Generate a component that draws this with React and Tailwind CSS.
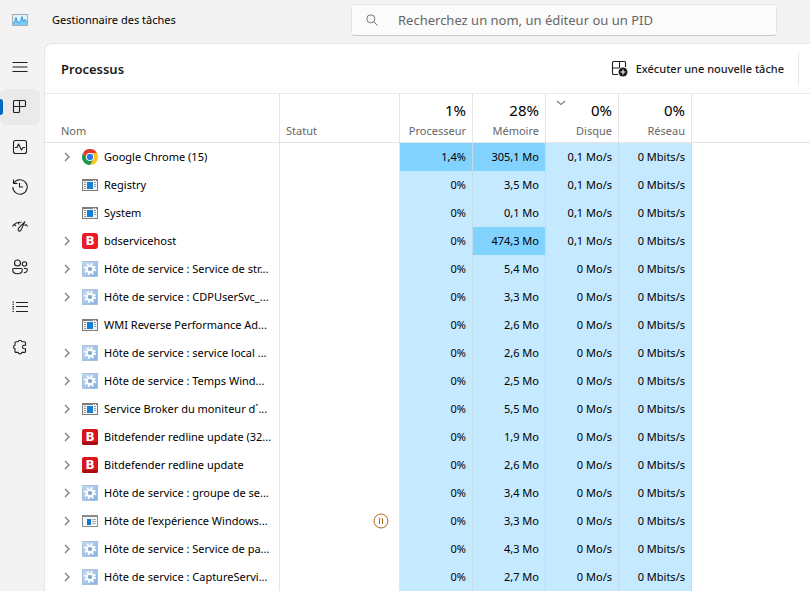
import { useState } from "react";

const PROCESSES = [
    { name: "Google Chrome (15)", icon: "chrome", expandable: true, cpu: "1,4%", mem: "305,1 Mo", disk: "0,1 Mo/s", net: "0 Mbits/s", hotCpu: true, hotMem: true },
    { name: "Registry", icon: "window", cpu: "0%", mem: "3,5 Mo", disk: "0,1 Mo/s", net: "0 Mbits/s" },
    { name: "System", icon: "window", cpu: "0%", mem: "0,1 Mo", disk: "0,1 Mo/s", net: "0 Mbits/s" },
    { name: "bdservicehost", icon: "bitFlat", expandable: true, cpu: "0%", mem: "474,3 Mo", disk: "0,1 Mo/s", net: "0 Mbits/s", hotMem: true },
    { name: "Hôte de service : Service de str...", icon: "gear", expandable: true, cpu: "0%", mem: "5,4 Mo", disk: "0 Mo/s", net: "0 Mbits/s" },
    { name: "Hôte de service : CDPUserSvc_...", icon: "gear", expandable: true, cpu: "0%", mem: "3,3 Mo", disk: "0 Mo/s", net: "0 Mbits/s" },
    { name: "WMI Reverse Performance Ad...", icon: "window", cpu: "0%", mem: "2,6 Mo", disk: "0 Mo/s", net: "0 Mbits/s" },
    { name: "Hôte de service : service local ...", icon: "gear", expandable: true, cpu: "0%", mem: "2,6 Mo", disk: "0 Mo/s", net: "0 Mbits/s" },
    { name: "Hôte de service : Temps Wind...", icon: "gear", expandable: true, cpu: "0%", mem: "2,5 Mo", disk: "0 Mo/s", net: "0 Mbits/s" },
    { name: "Service Broker du moniteur d´...", icon: "window", expandable: true, cpu: "0%", mem: "5,5 Mo", disk: "0 Mo/s", net: "0 Mbits/s" },
    { name: "Bitdefender redline update (32...", icon: "bit", expandable: true, cpu: "0%", mem: "1,9 Mo", disk: "0 Mo/s", net: "0 Mbits/s" },
    { name: "Bitdefender redline update", icon: "bit", expandable: true, cpu: "0%", mem: "2,6 Mo", disk: "0 Mo/s", net: "0 Mbits/s" },
    { name: "Hôte de service : groupe de se...", icon: "gear", expandable: true, cpu: "0%", mem: "3,4 Mo", disk: "0 Mo/s", net: "0 Mbits/s" },
    { name: "Hôte de l'expérience Windows...", icon: "app", expandable: true, suspended: true, cpu: "0%", mem: "3,3 Mo", disk: "0 Mo/s", net: "0 Mbits/s" },
    { name: "Hôte de service : Service de pa...", icon: "gear", expandable: true, cpu: "0%", mem: "4,3 Mo", disk: "0 Mo/s", net: "0 Mbits/s" },
    { name: "Hôte de service : CaptureServi...", icon: "gear", expandable: true, cpu: "0%", mem: "2,7 Mo", disk: "0 Mo/s", net: "0 Mbits/s" },
];

const USAGE_COLUMNS = [
    { key: "cpu", total: "1%", label: "Processeur" },
    { key: "mem", total: "28%", label: "Mémoire" },
    { key: "disk", total: "0%", label: "Disque", sorted: true },
    { key: "net", total: "0%", label: "Réseau" },
];

// 16px outline icons for the navigation rail
const NAV_ITEMS = [
    {
        label: "Processus",
        drawing: (
            <path d="M2.500 1.500h10a1 1 0 0 1 1 1v4a1 1 0 0 1-1 1h-5v5a1 1 0 0 1-1 1h-4a1 1 0 0 1-1-1v-10a1 1 0 0 1 1-1zM7.500 1.500v6M1.500 7.500h6" />
        ),
    },
    {
        label: "Performance",
        drawing: (
            <>
                <rect x="1.500" y="1.500" width="13" height="13" rx="2" />
                <path d="M3 8.500h2L6.500 5l3 6L11 8.500h2" />
            </>
        ),
    },
    {
        label: "Historique des applications",
        drawing: <path d="M1.500.5v4h4M1.800 4.300A7.200 7.200 0 1 1 .8 8M7.500 4v4H11" />,
    },
    {
        label: "Applications de démarrage",
        drawing: (
            <path d="M.5 7.500C2 4.500 5 3 9.500 3.200M2.500 5.500 4 7M14 5.200l1.500 2.300M12.500 6.500l1.200-.9M12.800 2.800 7.500 8.200c-1.400 1.500-1.700 3-.9 3.700.8.6 2 .1 2.700-1.500zM6.200 3.800l.8 1.600" />
        ),
    },
    {
        label: "Utilisateurs",
        drawing: (
            <>
                <circle cx="5.500" cy="4" r="3" />
                <circle cx="12.500" cy="5" r="2.200" />
                <path d="M1.700 9.500h7.600a1 1 0 0 1 1 1c0 2.700-1.800 4.300-4.800 4.300S.7 13.200.7 10.500a1 1 0 0 1 1-1zM12 9.500h2.300a1 1 0 0 1 1 1c0 2-1.200 3.200-3.500 3.300" />
            </>
        ),
    },
    {
        label: "Détails",
        drawing: <path d="M4 3.500h12M4 7.500h12M4 12.500h12M.5 3h1.500M.5 5.300h1.500M.5 7.600h1.500M.5 9.900h1.500M.5 12.500h1.500" />,
    },
    {
        label: "Services",
        drawing: (
            <path d="M4 2.700h2.200a1.900 1.900 0 0 1 3.700 0h2.600a1 1 0 0 1 1 1v2.500h-1.200a1.800 1.800 0 0 0 0 3.600h1.200v2.600a1 1 0 0 1-1 1H9.900a1.900 1.900 0 0 1-3.700 0H4a1 1 0 0 1-1-1V9.900a1.900 1.900 0 0 1 0-3.700V3.700a1 1 0 0 1 1-1z" />
        ),
    },
];

function LineIcon({ children }) {
    return (
        <svg viewBox="0 0 16 16" className="size-4 overflow-visible" fill="none" stroke="#1f1f1f" strokeWidth="1.1" strokeLinejoin="round" aria-hidden="true">
            {children}
        </svg>
    );
}

function AppLogo() {
    return (
        <svg viewBox="0 0 16 12" className="h-3 w-4" aria-hidden="true">
            <rect x=".5" y=".5" width="15" height="11" fill="#e3f3fc" stroke="#a3adb5" />
            <path d="M1 11V9l1.500-1L4 3.500 5.500 8 7 8.500l1.500-1L10 2.500l1.500 5L13 5.500 15 8.500V11z" fill="#7cc9f6" />
            <path d="M1 9l1.500-1L4 3.500 5.500 8 7 8.500l1.500-1L10 2.500l1.500 5L13 5.500 15 8.500" fill="none" stroke="#2a93e0" strokeWidth=".9" />
        </svg>
    );
}

function ChromeIcon() {
    return (
        <svg viewBox="0 0 48 48" className="size-4 shrink-0" aria-hidden="true">
            <path d="M24 12h20.800A24 24 0 0 1 24 48l10.400-18z" fill="#fcc31e" />
            <path d="M3.200 12 13.600 30 24 36l10.400-6L24 48A24 24 0 0 1 3.200 12z" fill="#1e9648" />
            <path d="M3.200 12A24 24 0 0 1 44.800 12H24a12 12 0 0 0-10.400 18z" fill="#e33b2e" />
            <circle cx="24" cy="24" r="12" fill="#fff" />
            <circle cx="24" cy="24" r="9.500" fill="#2f7bea" />
        </svg>
    );
}

function WindowIcon() {
    return (
        <svg viewBox="0 0 16 16" className="size-4 shrink-0" shapeRendering="crispEdges" aria-hidden="true">
            <rect x="0" y="2" width="16" height="12" fill="#7c7c7c" />
            <rect x="1" y="4" width="14" height="9" fill="#f4f4f4" />
            <path d="M11 3h1v1h-1zM13 3h1v1h-1z" fill="#fff" />
            <rect x="5" y="5" width="6" height="7" fill="#1180d8" />
            <path d="M2 5h2v1H2zM2 7h2v1H2zM2 9h2v1H2zM2 11h2v1H2zM12 5h2v1h-2zM12 7h2v1h-2zM12 9h2v1h-2z" fill="#9a9a9a" />
        </svg>
    );
}

function HostAppIcon() {
    return (
        <svg viewBox="0 0 16 16" className="size-4 shrink-0" shapeRendering="crispEdges" aria-hidden="true">
            <rect x="0" y="2" width="16" height="12" fill="#8c8c8c" />
            <rect x="1" y="4" width="14" height="9" fill="#f7f7f7" />
            <rect x="5" y="6" width="4" height="6" fill="#0b78d0" />
            <path d="M10 6h4v1h-4zM10 8h4v1h-4zM10 10h4v1h-4z" fill="#a6a6a6" />
        </svg>
    );
}

function GearIcon() {
    return (
        <svg viewBox="0 0 16 16" className="size-4 shrink-0" aria-hidden="true">
            <defs>
                <linearGradient id="gearTile" x1="0" y1="0" x2="1" y2="1">
                    <stop offset="0" stopColor="#c4dbf2" />
                    <stop offset="1" stopColor="#86b0e0" />
                </linearGradient>
            </defs>
            <rect x=".5" y=".5" width="15" height="15" fill="url(#gearTile)" stroke="#a9c3de" />
            <circle cx="8" cy="8" r="5" fill="none" stroke="#fff" strokeWidth="2" strokeDasharray="2 1.930" />
            <circle cx="8" cy="8" r="3.200" fill="none" stroke="#fff" strokeWidth="2.200" />
            <circle cx="8" cy="8" r="2" fill="#7ea9d8" />
        </svg>
    );
}

function BitdefenderIcon({ flat }) {
    return (
        <svg viewBox="0 0 16 16" className="size-4 shrink-0" aria-hidden="true">
            <rect width="16" height="16" rx={flat ? 3 : 2} fill={flat ? "#ed1c24" : "#d9151a"} />
            {!flat && <path d="M0 13h16v1a2 2 0 0 1-2 2H2a2 2 0 0 1-2-2z" fill="#a80c10" />}
            <text x="8" y="12" textAnchor="middle" fontFamily="DejaVu Sans, sans-serif" fontWeight="bold" fontSize="12" fill="#fff">B</text>
        </svg>
    );
}

function ProcessIcon({ type }) {
    if (type === "chrome") return <ChromeIcon />;
    if (type === "window") return <WindowIcon />;
    if (type === "app") return <HostAppIcon />;
    if (type === "gear") return <GearIcon />;
    return <BitdefenderIcon flat={type === "bitFlat"} />;
}

function TitleBar() {
    return (
        <header className="flex h-[43px] items-center pb-[3px]">
            <div className="flex w-[351px] shrink-0 items-center gap-6 pl-3">
                <AppLogo />
                <h1 className="text-[11px] leading-4">Gestionnaire des tâches</h1>
            </div>
            <label className="flex h-8 w-full max-w-[426px] items-center gap-5 rounded border border-[#e5e5e5] border-b-[#c9c9c9] bg-[#fbfbfb] pl-[14px]">
                <svg viewBox="0 0 12 12" className="size-3 shrink-0" fill="none" stroke="#767676" aria-hidden="true">
                    <circle cx="4.800" cy="4.800" r="4" />
                    <path d="m7.800 7.800 3.700 3.700" />
                </svg>
                <input
                    type="search"
                    aria-label="Rechercher"
                    placeholder="Recherchez un nom, un éditeur ou un PID"
                    className="min-w-0 flex-1 bg-transparent text-[13px] leading-5 outline-none placeholder:text-[#666666]"
                />
            </label>
        </header>
    );
}

function NavRail({ active, onSelect }) {
    return (
        <nav className="flex w-11 shrink-0 flex-col gap-1 pt-1.5">
            <button type="button" aria-label="Menu" className="flex h-9 w-10 items-center justify-center">
                <LineIcon>
                    <path d="M.5 3.500h15M.5 8h15M.5 12.500h15" />
                </LineIcon>
            </button>
            {NAV_ITEMS.map((item) => (
                <button
                    key={item.label}
                    type="button"
                    aria-label={item.label}
                    onClick={() => onSelect(item.label)}
                    className={`relative flex h-9 w-10 items-center justify-center rounded-md ${active === item.label ? "bg-[#eaeaea]" : ""}`}
                >
                    {active === item.label && <span className="absolute top-2.5 left-0 h-4 w-[3px] rounded-r-full bg-[#0067c0]" />}
                    <LineIcon>{item.drawing}</LineIcon>
                </button>
            ))}
        </nav>
    );
}

function PageHeader() {
    return (
        <div className="flex h-[50px] items-center border-b border-[#e9e9e9] pr-[11px] pl-4">
            <h2 className="flex-1 text-[13px] leading-5 font-semibold text-[#1b1b1b]">Processus</h2>
            <div className="flex h-8 items-center border-r border-[#e5e5e5] pr-[14px]">
                <button type="button" className="flex items-center gap-2 text-[11px] leading-4 font-medium text-[#1b1b1b]">
                    <svg viewBox="0 0 16 16" className="size-4 overflow-visible" fill="none" stroke="#1f1f1f" strokeWidth="1.100" aria-hidden="true">
                        <path d="M6 13.500H1.500a1 1 0 0 1-1-1V1.500a1 1 0 0 1 1-1h11a1 1 0 0 1 1 1V6M7.500.5v6.500M.5 7h6.500" />
                        <circle cx="11" cy="11" r="4.500" fill="#1b1b1b" stroke="none" />
                        <path d="M11 8.500v5M8.500 11h5" stroke="#fff" />
                    </svg>
                    Exécuter une nouvelle tâche
                </button>
            </div>
        </div>
    );
}

function ProcessRow({ process }) {
    const cool = "bg-[#c5e9ff]";
    const hot = "bg-[#82d2ff]";

    return (
        <tr className="h-7">
            <td className="border-r border-[#e5e5e5] p-0 pl-4">
                <div className="flex items-center">
                    <div className="mr-[9px] flex w-3 shrink-0 justify-center">
                        {process.expandable && (
                            <button type="button" aria-label={`Développer ${process.name}`}>
                                <svg viewBox="0 0 6 10" className="h-2.5 w-1.5" fill="none" stroke="#808080" strokeWidth="1.400" aria-hidden="true">
                                    <path d="m1 1 4 4-4 4" />
                                </svg>
                            </button>
                        )}
                    </div>
                    <ProcessIcon type={process.icon} />
                    <span className="ml-1.5 whitespace-nowrap">{process.name}</span>
                </div>
            </td>
            <td className="border-r border-[#e5e5e5] p-0 pr-2.5">
                {process.suspended && (
                    <svg viewBox="0 0 16 16" className="ml-auto size-4" fill="none" stroke="#b06a1c" role="img" aria-label="Suspendu">
                        <circle cx="8" cy="8" r="7" />
                        <path d="M6.500 5v6M9.500 5v6" />
                    </svg>
                )}
            </td>
            {USAGE_COLUMNS.map((col) => {
                const isHot = (col.key === "cpu" && process.hotCpu) || (col.key === "mem" && process.hotMem);
                return (
                    <td key={col.key} className={`border-r border-[#c4dce8] p-0 pr-1.5 text-right whitespace-nowrap ${isHot ? hot : cool}`}>
                        {process[col.key]}
                    </td>
                );
            })}
            <td className="p-0"></td>
        </tr>
    );
}

function ProcessTable() {
    return (
        <table className="w-full table-fixed border-separate border-spacing-0 text-[11px] leading-4 text-black">
            <colgroup>
                <col className="w-[235px]" />
                <col className="w-[120px]" />
                <col className="w-[73px]" />
                <col className="w-[73px]" />
                <col className="w-[73px]" />
                <col className="w-[73px]" />
                <col />
            </colgroup>
            <thead>
                <tr className="h-[49px] text-[#666666]">
                    <th scope="col" className="border-r border-b border-[#e5e5e5] p-0 pb-[3px] pl-4 text-left align-bottom font-normal">Nom</th>
                    <th scope="col" className="border-r border-b border-[#e5e5e5] p-0 pb-[3px] pl-1.5 text-left align-bottom font-normal">Statut</th>
                    {USAGE_COLUMNS.map((col) => (
                        <th
                            key={col.key}
                            scope="col"
                            aria-sort={col.sorted ? "descending" : undefined}
                            className="relative border-r border-b border-[#e5e5e5] p-0 pr-1.5 pb-[3px] text-right align-bottom font-normal"
                        >
                            {col.sorted && (
                                <svg viewBox="0 0 10 6" className="absolute top-1.5 left-2.5 h-1.5 w-2.5" fill="none" stroke="#808080" strokeWidth="1.200" aria-hidden="true">
                                    <path d="m1 1 4 3.500L9 1" />
                                </svg>
                            )}
                            <div className="mb-[3px] text-[15px] leading-5 text-black">{col.total}</div>
                            <div>{col.label}</div>
                        </th>
                    ))}
                    <td className="border-b border-[#e5e5e5] p-0"></td>
                </tr>
            </thead>
            <tbody>
                {PROCESSES.map((process) => (
                    <ProcessRow key={process.name} process={process} />
                ))}
            </tbody>
        </table>
    );
}

export default function App() {
    const [active, setActive] = useState("Processus");

    return (
        <div className="flex min-h-screen flex-col bg-[#f3f3f3] font-['Noto_Sans',sans-serif] text-black">
            <TitleBar />
            <div className="flex flex-1">
                <NavRail active={active} onSelect={setActive} />
                <main className="min-w-0 flex-1 overflow-hidden rounded-tl-lg border-t border-l border-[#e5e5e5] bg-white">
                    <PageHeader />
                    <ProcessTable />
                </main>
            </div>
        </div>
    );
}
